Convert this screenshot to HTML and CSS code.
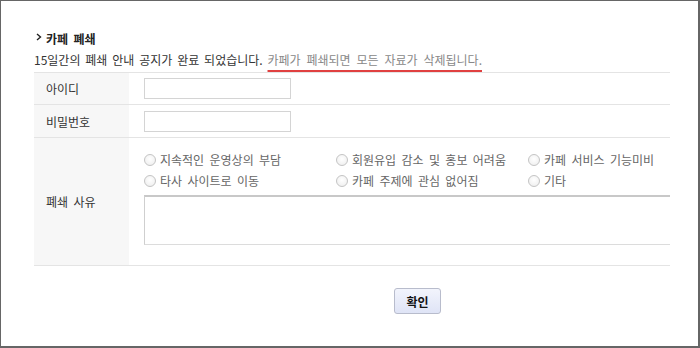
FILE: index.html
```html
<!DOCTYPE html>
<html lang="ko">
<head>
<meta charset="utf-8">
<link rel="stylesheet" href="styles.css">
</head>
<body>
<div class="frame">
  <h2 class="title"><svg class="chev" width="6" height="8" viewBox="0 0 6 8"><polyline points="1,1 4.5,4 1,7" fill="none" stroke="#222" stroke-width="1.4"/></svg>카페 폐쇄</h2>
  <p class="notice">15일간의 폐쇄 안내 공지가 완료 되었습니다. <span class="warn">카페가 폐쇄되면 모든 자료가 삭제됩니다.</span></p>
  <div class="form">
    <div class="row r1">
      <div class="label">아이디</div>
      <div class="field"><input class="text" type="text"></div>
    </div>
    <div class="row r2">
      <div class="label">비밀번호</div>
      <div class="field"><input class="text" type="password"></div>
    </div>
    <div class="row r3">
      <div class="label">폐쇄 사유</div>
      <div class="field col">
        <div class="radios">
          <label class="radio"><span class="dot"></span>지속적인 운영상의 부담</label>
          <label class="radio"><span class="dot"></span>회원유입 감소 및 홍보 어려움</label>
          <label class="radio"><span class="dot"></span>카페 서비스 기능미비</label>
          <label class="radio"><span class="dot"></span>타사 사이트로 이동</label>
          <label class="radio"><span class="dot"></span>카페 주제에 관심 없어짐</label>
          <label class="radio"><span class="dot"></span>기타</label>
        </div>
        <textarea class="reason"></textarea>
      </div>
    </div>
  </div>
  <div class="actions"><button class="btn" type="button">확인</button></div>
</div>
</body>
</html>
```
FILE: styles.css
```css
html, body {
  margin: 0;
  padding: 0;
  background: #fff;
}
.frame {
  width: 700px;
  height: 348px;
  box-sizing: border-box;
  border-top: 1px solid #666;
  border-left: 1px solid #666;
  border-right: 2px solid #666;
  border-bottom: 2px solid #666;
  padding: 30px 0 0 33px;
  font-family: "Noto Sans CJK KR", "Noto Sans", sans-serif;
  font-size: 12px;
  color: #333;
  word-spacing: 2px;
}
.title {
  margin: 0;
  font-size: 12px;
  font-weight: bold;
  color: #222;
  line-height: 16px;
  height: 16px;
  display: flex;
  align-items: flex-start;
}
.chev {
  margin: 2px 4px 0 2px;
}
.notice {
  margin: 5px 0 0 0;
  line-height: 16px;
  height: 20px;
  word-spacing: 1.5px;
}
.warn {
  color: #888;
  word-spacing: 2.5px;
  text-decoration: underline 2px #e04040;
  text-underline-offset: 5px;
  text-decoration-skip-ink: none;
}
.form {
  width: 636px;
  border-top: 1px solid #e4e4e4;
  overflow: hidden;
}
.row {
  display: flex;
  border-bottom: 1px solid #e4e4e4;
}
.r1 { height: 31px; }
.r2 { height: 32px; }
.r3 { height: 127px; }
.label {
  width: 95px;
  flex: none;
  box-sizing: border-box;
  padding-left: 12px;
  background: #f7f7f7;
  display: flex;
  align-items: center;
  color: #333;
}
.field {
  flex: 1;
  padding-left: 15px;
  display: flex;
  align-items: center;
}
.field.col {
  flex-direction: column;
  align-items: flex-start;
  padding-top: 11px;
}
.text {
  width: 147px;
  height: 21px;
  box-sizing: border-box;
  border: 1px solid #d4d4d4;
  margin: 0;
  padding: 0;
  background: #fff;
}
.radios {
  display: grid;
  grid-template-columns: 192px 192px auto;
  grid-auto-rows: 21px;
  width: 480px;
}
.radio {
  display: flex;
  align-items: center;
  color: #666;
  white-space: nowrap;
}
.dot {
  width: 10px;
  height: 10px;
  border: 1px solid #c4c4c4;
  border-radius: 50%;
  background: radial-gradient(circle at 50% 40%, #fff 0%, #ececec 100%);
  margin-right: 4px;
  flex: none;
}
.reason {
  width: 540px;
  height: 50px;
  box-sizing: border-box;
  margin: 4px 0 0 0;
  padding: 0;
  border: 1px solid #dcdcdc;
  border-top: 2px solid #c8c8c8;
  border-left: 1px solid #cfcfcf;
  resize: none;
  background: #fff;
}
.actions {
  padding: 22px 0 0 360px;
}
.btn {
  width: 47px;
  height: 26px;
  box-sizing: border-box;
  border: 1px solid #b8bccc;
  border-radius: 3px;
  background: linear-gradient(#f2f4fc, #dfe4f6);
  font-family: "Noto Sans CJK KR", "Noto Sans", sans-serif;
  font-size: 12px;
  font-weight: bold;
  color: #111;
  padding: 0;
}
```
